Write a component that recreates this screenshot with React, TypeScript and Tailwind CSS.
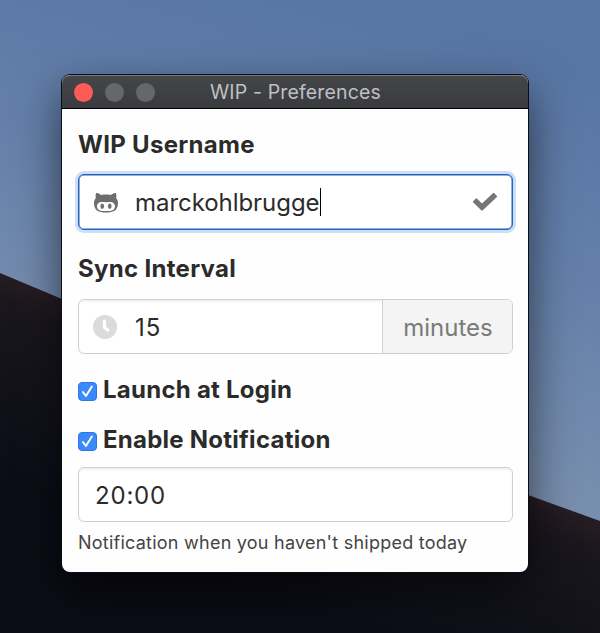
import type { ReactNode } from "react";

function Wallpaper() {
  return (
    <svg className="absolute inset-0 h-full w-full" viewBox="0 0 600 633" preserveAspectRatio="none" aria-hidden="true">
      <defs>
        <linearGradient id="sky" gradientUnits="userSpaceOnUse" x1="330" y1="0" x2="220" y2="400">
          <stop offset="0" stopColor="#5876a4" />
          <stop offset="0.5" stopColor="#6480aa" />
          <stop offset="1" stopColor="#788eae" />
        </linearGradient>
        <linearGradient id="dune" gradientUnits="userSpaceOnUse" x1="300" y1="399" x2="225" y2="577">
          <stop offset="0" stopColor="#261d23" />
          <stop offset="0.15" stopColor="#19161d" />
          <stop offset="0.6" stopColor="#11111a" />
          <stop offset="1" stopColor="#0b0c15" />
        </linearGradient>
      </defs>
      <rect width="600" height="633" fill="url(#sky)" />
      <path d="M0 273 L62 299 L528 495 L600 521 V633 H0 Z" fill="url(#dune)" />
    </svg>
  );
}

function OctofaceIcon() {
  return (
    <svg width="24" height="24" viewBox="0 0 16 16" fill="#6e6e6e" aria-hidden="true">
      <path d="M14.7 5.34c.13-.32.55-1.59-.13-3.31 0 0-1.05-.33-3.44 1.3-1-.28-2.07-.32-3.13-.32s-2.13.04-3.13.32c-2.39-1.64-3.44-1.3-3.44-1.3-.68 1.72-.26 2.99-.13 3.31C.49 6.21 0 7.33 0 8.69 0 13.84 3.33 15 7.98 15S16 13.84 16 8.69c0-1.36-.49-2.48-1.3-3.35zM8 14.02c-3.3 0-5.98-.15-5.98-3.35 0-.76.38-1.48 1.02-2.07 1.07-.98 2.9-.46 4.96-.46 2.07 0 3.88-.52 4.96.46.65.59 1.02 1.3 1.02 2.07 0 3.19-2.68 3.35-5.98 3.35zM5.49 9.01c-.66 0-1.2.8-1.2 1.78s.54 1.79 1.2 1.79c.66 0 1.2-.8 1.2-1.79s-.54-1.78-1.2-1.78zm5.02 0c-.66 0-1.2.79-1.2 1.78s.54 1.79 1.2 1.79c.66 0 1.2-.8 1.2-1.79s-.53-1.78-1.2-1.78z" />
    </svg>
  );
}

function ClockIcon() {
  return (
    <svg width="24" height="24" viewBox="0 0 24 24" fill="none" aria-hidden="true">
      <circle cx="12" cy="12" r="12" fill="#dbdbdb" />
      <path d="M11.5 6.2V12.4L14.9 15" stroke="#fff" strokeWidth="3.2" strokeLinecap="round" strokeLinejoin="round" />
    </svg>
  );
}

function CheckIcon() {
  return (
    <svg width="26" height="20" viewBox="0 0 26 20" aria-hidden="true">
      <path
        d="M1.6 9.7L4.4 6.9L10 12.4L21.6 1.6L24.4 4.4L10 18Z"
        fill="#767676"
        stroke="#767676"
        strokeWidth="1.4"
        strokeLinejoin="round"
      />
    </svg>
  );
}

function Checkbox({ label }: { label: string }) {
  return (
    <label className="flex h-[30px] items-center">
      <span
        role="checkbox"
        aria-checked="true"
        aria-label={label}
        className="mt-[5px] flex h-[19px] w-[19px] items-center justify-center rounded-[4px] border border-[#2b76ea] bg-[#3b8af8]"
      >
        <svg width="13" height="13" viewBox="0 0 13 13" fill="none" aria-hidden="true" className="shrink-0">
          <path d="M2 7.1L4.9 11L10.9 1.6" stroke="#fff" strokeWidth="1.9" strokeLinecap="round" strokeLinejoin="round" />
        </svg>
      </span>
      <span className="mt-0.5 ml-1.5 text-[24px] leading-[30px] font-bold tracking-[0.25px] whitespace-nowrap">{label}</span>
    </label>
  );
}

function FieldLabel({ children }: { children: ReactNode }) {
  return (
    <h2 className="h-[30px] text-[24px] leading-[31px] font-bold tracking-[0.3px] whitespace-nowrap">{children}</h2>
  );
}

export default function App() {
  return (
    <div className="relative h-[633px] w-[600px] overflow-hidden font-['Inter',sans-serif] text-[#2b2b2b]">
      <Wallpaper />
      <main className="relative mt-[75px] ml-[62px] h-[497px] w-[466px] rounded-[8px] bg-[#fefefe] shadow-[0_0_0_1px_#0b0c14,0_18px_46px_0_rgba(0,0,0,0.6)]">
        <header className="grid h-[34px] grid-cols-[148px_1fr_148px] items-center rounded-t-[8px] border-b border-black bg-linear-to-b from-[#454649] to-[#3a3b3e] shadow-[inset_0_1px_0_#77797f]">
          <div className="flex gap-3 pt-px pl-3">
            <span className="h-[19px] w-[19px] rounded-full bg-[#fc5b57]" />
            <span className="h-[19px] w-[19px] rounded-full bg-[#66676b]" />
            <span className="h-[19px] w-[19px] rounded-full bg-[#66676b]" />
          </div>
          <h1 className="pt-[3px] text-center text-[19.5px] tracking-[0.15px] whitespace-nowrap text-[#bfc0c4]">
            WIP - Preferences
          </h1>
        </header>

        <div className="pt-5 pr-[15px] pl-4">
          <FieldLabel>WIP Username</FieldLabel>
          <div className="mt-[15px] flex h-14 items-center rounded-[6px] border-[1.5px] border-[#2562b6] bg-white pr-3.5 pl-[15px] shadow-[0_0_0_3px_#cbdff8,inset_0_0_0_0.5px_#2562b6]">
            <OctofaceIcon />
            <span className="mt-0.5 ml-[17px] text-[24px] tracking-[-0.05px]">marckohlbrugge</span>
            <span className="h-7 w-px bg-black" />
            <span className="ml-auto">
              <CheckIcon />
            </span>
          </div>

          <div className="mt-[23px]">
            <FieldLabel>Sync Interval</FieldLabel>
          </div>
          <div className="mt-4 flex h-[55px] overflow-hidden rounded-[6px] border-[1.5px] border-[#d0d0d0] bg-white">
            <div className="flex flex-1 items-center pl-[14px] shadow-[inset_0_2px_2px_rgba(0,0,0,0.05)]">
              <ClockIcon />
              <span className="mt-0.5 ml-[18px] text-[24px] tracking-[0.9px]">15</span>
            </div>
            <div className="flex w-[130px] items-center justify-center border-l-[1.5px] border-[#d0d0d0] bg-[#f4f4f4] pt-0.5 pl-px text-[24px] text-[#7a7a7a]">
              minutes
            </div>
          </div>

          <div className="mt-5">
            <Checkbox label="Launch at Login" />
          </div>
          <div className="mt-5">
            <Checkbox label="Enable Notification" />
          </div>
          <div className="mt-[13px] flex h-[55px] items-center rounded-[6px] border-[1.5px] border-[#d0d0d0] bg-white pt-0.5 pl-4 text-[24px] tracking-[0.8px] shadow-[inset_0_2px_2px_rgba(0,0,0,0.05)]">
            20:00
          </div>
          <p className="mt-[7px] text-[18px] leading-7 tracking-[0.24px] whitespace-nowrap text-[#444]">
            Notification when you haven't shipped today
          </p>
        </div>
      </main>
    </div>
  );
}
